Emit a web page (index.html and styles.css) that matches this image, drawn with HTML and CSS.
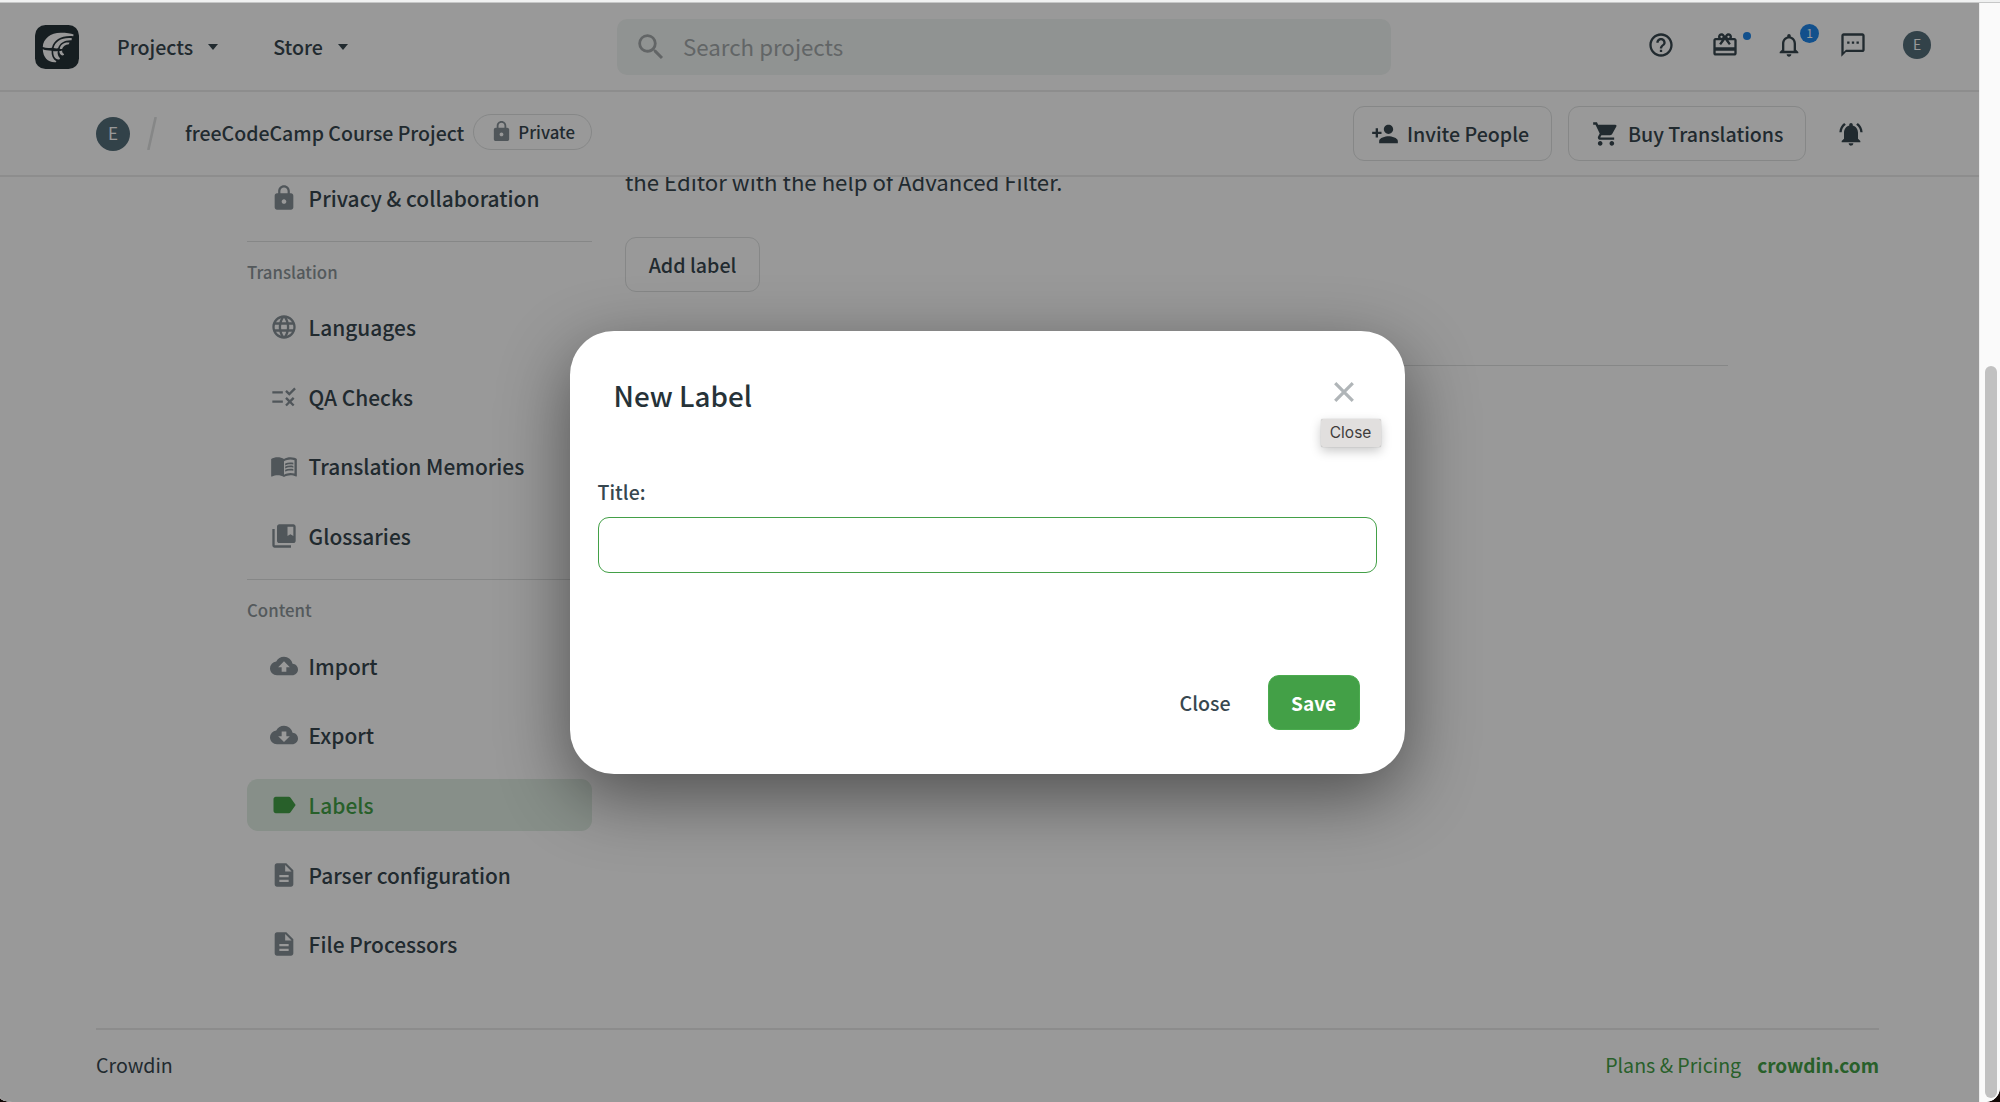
FILE: index.html
```html
<!DOCTYPE html>
<html lang="en">
<head>
<meta charset="utf-8">
<title>Labels - freeCodeCamp Course Project</title>
<link rel="stylesheet" href="styles.css">
</head>
<body>
<svg class="sprite" aria-hidden="true">
  <symbol id="lock" viewBox="0 0 24 24"><path d="M18 8h-1V6c0-2.76-2.24-5-5-5S7 3.24 7 6v2H6c-1.1 0-2 .9-2 2v10c0 1.1.9 2 2 2h12c1.1 0 2-.9 2-2V10c0-1.1-.9-2-2-2zm-6 9c-1.1 0-2-.9-2-2s.9-2 2-2 2 .9 2 2-.9 2-2 2zm3.1-9H8.9V6c0-1.71 1.39-3.1 3.1-3.1 1.71 0 3.1 1.39 3.1 3.1v2z"/></symbol>
  <symbol id="globe" viewBox="0 0 24 24"><path d="M11.99 2C6.47 2 2 6.48 2 12s4.47 10 9.99 10C17.52 22 22 17.52 22 12S17.52 2 11.99 2zm6.93 6h-2.95a15.65 15.65 0 0 0-1.38-3.56A8.03 8.03 0 0 1 18.92 8zM12 4.04c.83 1.2 1.48 2.53 1.91 3.96h-3.82c.43-1.43 1.08-2.76 1.91-3.96zM4.26 14C4.1 13.36 4 12.69 4 12s.1-1.36.26-2h3.38c-.08.66-.14 1.32-.14 2s.06 1.34.14 2H4.26zm.82 2h2.95c.32 1.25.78 2.45 1.38 3.56A7.987 7.987 0 0 1 5.08 16zm2.95-8H5.08a7.987 7.987 0 0 1 4.33-3.56A15.65 15.65 0 0 0 8.03 8zM12 19.96c-.83-1.2-1.48-2.53-1.91-3.96h3.82c-.43 1.43-1.08 2.76-1.91 3.96zM14.34 14H9.66c-.09-.66-.16-1.32-.16-2s.07-1.35.16-2h4.68c.09.65.16 1.32.16 2s-.07 1.34-.16 2zm.25 5.56c.6-1.11 1.06-2.31 1.38-3.56h2.95a8.03 8.03 0 0 1-4.33 3.56zM16.36 14c.08-.66.14-1.32.14-2s-.06-1.34-.14-2h3.38c.16.64.26 1.31.26 2s-.1 1.36-.26 2h-3.38z"/></symbol>
  <symbol id="rule" viewBox="0 0 24 24"><path d="M16.54 11 13 7.46l1.41-1.41 2.12 2.12 4.24-4.24 1.41 1.41L16.54 11zM11 7H2v2h9V7zm10 6.41L19.59 12 17 14.59 14.41 12 13 13.41 15.59 16 13 18.59 14.41 20 17 17.41 19.59 20 21 18.59 18.41 16 21 13.41zM11 15H2v2h9v-2z"/></symbol>
  <symbol id="book" viewBox="0 0 24 24"><path d="M21 5c-1.11-.35-2.33-.5-3.5-.5-1.95 0-4.05.4-5.5 1.5-1.45-1.1-3.55-1.5-5.5-1.5S2.45 4.9 1 6v14.65c0 .25.25.5.5.5.1 0 .15-.05.25-.05C3.1 20.45 5.05 20 6.5 20c1.95 0 4.05.4 5.5 1.5 1.35-.85 3.8-1.5 5.5-1.5 1.65 0 3.35.3 4.75 1.05.1.05.15.05.25.05.25 0 .5-.25.5-.5V6c-.6-.45-1.25-.75-2-1zm0 13.5c-1.1-.35-2.3-.5-3.5-.5-1.7 0-4.15.65-5.5 1.5V8c1.35-.85 3.8-1.5 5.5-1.5 1.2 0 2.4.15 3.5.5v11.5z"/><path d="M17.5 10.5c.88 0 1.73.09 2.5.26V9.240c-.79-.15-1.64-.24-2.5-.24-1.700 0-3.240.29-4.500.83v1.660c1.130-.64 2.700-.99 4.500-.99zM13 12.490v1.660c1.130-.64 2.700-.99 4.500-.99.88 0 1.730.09 2.500.26V11.900c-.79-.15-1.640-.24-2.500-.24-1.700 0-3.240.3-4.500.83zM17.500 14.330c-1.700 0-3.240.29-4.500.83v1.660c1.130-.64 2.700-.99 4.500-.99.88 0 1.730.09 2.500.26v-1.520c-.79-.16-1.640-.24-2.500-.24z"/></symbol>
  <symbol id="collection" viewBox="0 0 24 24"><path d="M4 6H2v14c0 1.100.9 2 2 2h14v-2H4V6z"/><path d="M20 2H8c-1.100 0-2 .9-2 2v12c0 1.100.9 2 2 2h12c1.100 0 2-.9 2-2V4c0-1.100-.9-2-2-2zm0 10-2.500-1.500L15 12V4h5v8z"/></symbol>
  <symbol id="upload" viewBox="0 0 24 24"><path d="M19.350 10.040A7.490 7.490 0 0 0 12 4C9.110 4 6.600 5.640 5.350 8.040A5.994 5.994 0 0 0 0 14c0 3.310 2.690 6 6 6h13c2.760 0 5-2.240 5-5 0-2.640-2.050-4.780-4.650-4.960zM14 13v4h-4v-4H7l5-5 5 5h-3z"/></symbol>
  <symbol id="download" viewBox="0 0 24 24"><path d="M19.350 10.040A7.490 7.490 0 0 0 12 4C9.110 4 6.600 5.640 5.350 8.040A5.994 5.994 0 0 0 0 14c0 3.310 2.690 6 6 6h13c2.760 0 5-2.240 5-5 0-2.640-2.050-4.780-4.650-4.960zM17 13l-5 5-5-5h3V9h4v4h3z"/></symbol>
  <symbol id="label" viewBox="0 0 24 24"><path d="M17.630 5.840C17.270 5.330 16.670 5 16 5L5 5.010C3.900 5.010 3 5.900 3 7v10c0 1.100.9 1.990 2 1.990L16 19c.67 0 1.270-.33 1.630-.84L22 12l-4.370-6.160z"/></symbol>
  <symbol id="doc" viewBox="0 0 24 24"><path d="M14 2H6c-1.100 0-1.990.9-1.990 2L4 20c0 1.100.89 2 1.990 2H18c1.100 0 2-.9 2-2V8l-6-6zm2 16H8v-2h8v2zm0-4H8v-2h8v2zm-3-5V3.500L18.500 9H13z"/></symbol>
  <symbol id="search" viewBox="0 0 24 24"><path d="M15.500 14h-.79l-.28-.27A6.471 6.471 0 0 0 16 9.500 6.500 6.500 0 1 0 9.500 16c1.610 0 3.090-.59 4.230-1.570l.27.28v.79l5 4.990L20.490 19l-4.990-5zm-6 0C7.010 14 5 11.990 5 9.500S7.010 5 9.500 5 14 7.010 14 9.500 11.990 14 9.500 14z"/></symbol>
  <symbol id="help" viewBox="0 0 24 24"><path d="M11 18h2v-2h-2v2zm1-16C6.480 2 2 6.480 2 12s4.480 10 10 10 10-4.480 10-10S17.520 2 12 2zm0 18c-4.410 0-8-3.590-8-8s3.590-8 8-8 8 3.590 8 8-3.590 8-8 8zm0-14c-2.210 0-4 1.790-4 4h2c0-1.100.9-2 2-2s2 .9 2 2c0 2-3 1.750-3 5h2c0-2.250 3-2.500 3-5 0-2.210-1.790-4-4-4z"/></symbol>
  <symbol id="gift" viewBox="0 0 24 24"><path d="M20 6h-2.180c.11-.31.18-.65.18-1 0-1.660-1.340-3-3-3-1.050 0-1.960.54-2.500 1.350l-.5.670-.5-.68C10.960 2.540 10.050 2 9 2 7.340 2 6 3.340 6 5c0 .35.07.69.18 1H4c-1.110 0-1.990.89-1.990 2L2 19c0 1.110.89 2 2 2h16c1.110 0 2-.89 2-2V8c0-1.110-.89-2-2-2zm-5-2c.55 0 1 .45 1 1s-.45 1-1 1-1-.45-1-1 .45-1 1-1zM9 4c.55 0 1 .45 1 1s-.45 1-1 1-1-.45-1-1 .45-1 1-1zm11 15H4v-2h16v2zm0-5H4V8h5.080L7 10.830 8.620 12 12 7.400l3.380 4.600L17 10.830 14.920 8H20v6z"/></symbol>
  <symbol id="bell" viewBox="0 0 24 24"><path d="M12 22c1.100 0 2-.9 2-2h-4c0 1.100.9 2 2 2zm6-6v-5c0-3.070-1.630-5.640-4.500-6.320V4c0-.83-.67-1.500-1.500-1.500s-1.500.67-1.500 1.500v.68C7.640 5.360 6 7.920 6 11v5l-2 2v1h16v-1l-2-2zm-2 1H8v-6c0-2.480 1.510-4.500 4-4.500s4 2.020 4 4.500v6z"/></symbol>
  <symbol id="chat" viewBox="0 0 24 24"><path d="M20 2H4c-1.100 0-2 .9-2 2v18l4-4h14c1.100 0 2-.9 2-2V4c0-1.100-.9-2-2-2zm0 14H6l-2 2V4h16v12zM7 9h2v2H7zm4 0h2v2h-2zm4 0h2v2h-2z"/></symbol>
  <symbol id="person-add" viewBox="0 0 24 24"><path d="M15 12c2.210 0 4-1.790 4-4s-1.790-4-4-4-4 1.790-4 4 1.790 4 4 4zm-9-2V7H4v3H1v2h3v3h2v-3h3v-2H6zm9 4c-2.670 0-8 1.340-8 4v2h16v-2c0-2.660-5.330-4-8-4z"/></symbol>
  <symbol id="cart" viewBox="0 0 24 24"><path d="M7 18c-1.100 0-1.990.9-1.990 2S5.900 22 7 22s2-.9 2-2-.9-2-2-2zM1 2v2h2l3.600 7.590-1.350 2.450c-.16.28-.25.61-.25.96 0 1.100.9 2 2 2h12v-2H7.420c-.14 0-.25-.11-.25-.25l.03-.12.9-1.630h7.450c.75 0 1.410-.41 1.750-1.030l3.580-6.490A1.003 1.003 0 0 0 20 4H5.210l-.94-2H1zm16 16c-1.100 0-1.990.9-1.990 2s.89 2 1.990 2 2-.9 2-2-.9-2-2-2z"/></symbol>
  <symbol id="bell-ring" viewBox="0 0 24 24"><path d="M7.580 4.080 6.150 2.650C3.750 4.480 2.170 7.300 2.030 10.500h2a8.445 8.445 0 0 1 3.550-6.420zm12.390 6.420h2c-.15-3.200-1.730-6.020-4.120-7.850l-1.420 1.430a8.495 8.495 0 0 1 3.540 6.420zM18 11c0-3.070-1.640-5.640-4.500-6.320V4c0-.83-.67-1.500-1.500-1.500s-1.500.67-1.500 1.500v.68C7.630 5.360 6 7.920 6 11v5l-2 2v1h16v-1l-2-2v-5zm-6 11c.14 0 .27-.01.4-.04.65-.14 1.180-.58 1.440-1.180.1-.24.15-.5.15-.78h-4c.01 1.100.9 2 2.010 2z"/></symbol>
</svg>

<div class="window">
  <div class="window-edge"></div>
  <div class="viewport">
    <div class="page">
      <header class="topbar">
        <svg class="logo" viewBox="45 45 130 130"><rect x="45" y="45" width="130" height="130" rx="31" fill="#263238"/><g fill="#fff"><path d="M68 110C69 86 91 68 121 68c16 0 31 2 38 5l-1 5c-33-3-57 9-63 34-10 1-19 1-27-2z"/><path d="M100 113c5-20 24-32 54-29l-1 6c-21-1-35 8-40 24-5 1-9 0-13-1z"/><path d="M118 115c3-13 13-20 29-18l-2 5c-11 1-17 6-20 14-3 0-5 0-7-1z"/><path d="M68 117c1 25 16 40 39 38l1-3c-10-6-15-17-14-31-10 0-18-1-26-4z"/><path d="M99 122c-1 15 6 27 18 25l2-4c-6-5-8-12-7-21-5 1-9 1-13 0z"/><path d="M117 122c0 9 5 15 13 12l1-3c-4-2-6-6-6-11-3 1-5 2-8 2z"/></g></svg>
        <nav class="menu">
          <a class="menu-item">Projects<i class="caret"></i></a>
          <a class="menu-item">Store<i class="caret"></i></a>
        </nav>
        <div class="search"><svg class="search-icon"><use href="#search"/></svg><span class="search-text">Search projects</span></div>
        <div class="tools">
          <span class="tool"><svg class="icon"><use href="#help"/></svg></span>
          <span class="tool"><svg class="icon"><use href="#gift"/></svg><i class="dot"></i></span>
          <span class="tool"><svg class="icon"><use href="#bell"/></svg><b class="badge">1</b></span>
          <span class="tool"><svg class="icon"><use href="#chat"/></svg></span>
          <span class="tool"><span class="avatar avatar-small">E</span></span>
        </div>
      </header>

      <div class="projectbar">
        <span class="avatar">E</span>
        <svg class="slash" viewBox="0 0 10 33"><path d="M8.700 0 1.300 33" stroke="#dfe1e2" stroke-width="2.600"/></svg>
        <h1 class="project-name">freeCodeCamp Course Project</h1>
        <span class="pill"><svg class="pill-icon"><use href="#lock"/></svg>Private</span>
        <div class="actions">
          <button class="button invite"><svg class="icon"><use href="#person-add"/></svg>Invite People</button>
          <button class="button buy"><svg class="icon"><use href="#cart"/></svg>Buy Translations</button>
          <svg class="icon"><use href="#bell-ring"/></svg>
        </div>
      </div>

      <main class="content">
        <aside class="sidebar">
          <a class="side-item first"><svg class="icon"><use href="#lock"/></svg>Privacy &amp; collaboration</a>
          <section class="side-group">
            <h2 class="side-title">Translation</h2>
            <a class="side-item"><svg class="icon"><use href="#globe"/></svg>Languages</a>
            <a class="side-item"><svg class="icon"><use href="#rule"/></svg>QA Checks</a>
            <a class="side-item"><svg class="icon"><use href="#book"/></svg>Translation Memories</a>
            <a class="side-item"><svg class="icon"><use href="#collection"/></svg>Glossaries</a>
          </section>
          <section class="side-group">
            <h2 class="side-title">Content</h2>
            <a class="side-item"><svg class="icon"><use href="#upload"/></svg>Import</a>
            <a class="side-item"><svg class="icon"><use href="#download"/></svg>Export</a>
            <a class="side-item active"><svg class="icon"><use href="#label"/></svg>Labels</a>
            <a class="side-item"><svg class="icon"><use href="#doc"/></svg>Parser configuration</a>
            <a class="side-item"><svg class="icon"><use href="#doc"/></svg>File Processors</a>
          </section>
        </aside>
        <section class="labels">
          <p class="intro">the Editor with the help of Advanced Filter.</p>
          <button class="button add">Add label</button>
          <hr class="rule">
        </section>
      </main>

      <footer class="footer">
        <span>Crowdin</span>
        <nav class="footer-links"><a>Plans &amp; Pricing</a><a class="strong">crowdin.com</a></nav>
      </footer>

      <div class="overlay">
        <div class="modal">
          <div class="modal-head">
            <h2 class="modal-title">New Label</h2>
            <svg class="close" viewBox="0 0 20 20"><path d="M1.200 1.200 18.800 18.800M18.800 1.200 1.200 18.800" stroke="#b0b5b8" stroke-width="3.200"/></svg>
            <span class="tooltip">Close</span>
          </div>
          <label class="field">Title:<input class="input" type="text"></label>
          <div class="modal-actions">
            <button class="text-button">Close</button>
            <button class="save">Save</button>
          </div>
        </div>
      </div>
    </div>
    <div class="scrollbar"><div class="thumb"></div></div>
  </div>
</div>
</body>
</html>
```
FILE: styles.css
```css
* { box-sizing: border-box; }

body {
  margin: 0;
  background: #120806;
  color: #37474f;
  font-family: "Noto Sans CJK SC", "Noto Sans", sans-serif;
  font-weight: 500;
  font-size: 19.6px;
  overflow: hidden;
}

h1, h2, p, hr { margin: 0; }
button { font: inherit; color: inherit; background: none; border: 0; padding: 0; }
.sprite { display: none; }
.icon { flex: none; width: 28px; height: 28px; fill: currentColor; }

.window {
  display: flex;
  flex-direction: column;
  height: 1102px;
  border-radius: 0 0 14px 12px / 0 0 15px 5px;
  overflow: hidden;
  background: #fff;
}
.window-edge { flex: none; height: 3px; background: linear-gradient(#f0f1f1 0 2px, #c6c7c7 2px); }
.viewport { flex: 1; display: flex; min-height: 0; }
.page { position: relative; flex: 1; display: flex; flex-direction: column; background: #fff; overflow: hidden; }

.topbar {
  flex: none;
  display: flex;
  align-items: center;
  height: 89px;
  padding: 0 48px 0 35px;
  border-bottom: 2px solid #ebecec;
}
.logo { width: 44px; height: 44px; }
.menu { display: flex; gap: 55px; width: 498px; margin-left: 38px; }
.menu-item { display: flex; align-items: center; gap: 15px; line-height: 30px; }
.caret { border: 5.5px solid transparent; border-top: 6px solid currentColor; border-bottom: 0; }
.search {
  display: flex;
  align-items: center;
  gap: 15px;
  width: 774px;
  height: 56px;
  margin-left: 2px;
  padding-left: 17px;
  border-radius: 10px;
  background: #f1f5f3;
  color: #a3a9ab;
  font-size: 22.3px;
  font-weight: 400;
  line-height: 30px;
}
.search-text { padding-bottom: 2px; }
.search-icon { width: 34px; height: 34px; fill: #a3a8aa; }
.tools { display: flex; gap: 36px; margin: 0 0 3px auto; }
.tool { position: relative; display: flex; width: 28px; height: 28px; }
.dot { position: absolute; left: 32px; top: 1px; width: 8px; height: 8px; border-radius: 50%; background: #1e86ea; }
.badge {
  position: absolute;
  left: 25px;
  top: -7px;
  width: 19px;
  height: 19px;
  border-radius: 50%;
  background: #1e86ea;
  color: #fff;
  font-size: 12px;
  line-height: 18px;
  font-weight: 400;
  text-align: center;
}
.avatar {
  flex: none;
  width: 34px;
  height: 34px;
  border-radius: 50%;
  background: #546e7a;
  color: #fff;
  font-size: 17px;
  font-weight: 400;
  line-height: 32px;
  text-align: center;
}
.avatar-small { width: 28px; height: 28px; font-size: 14px; line-height: 27px; }

.projectbar {
  flex: none;
  display: flex;
  align-items: center;
  height: 85px;
  padding-left: 96px;
  border-bottom: 2px solid #ebecec;
}
.slash { width: 10px; height: 33px; margin-left: 17px; }
.project-name { margin: 0 0 2px 28px; font-size: 19.5px; font-weight: 500; line-height: 30px; white-space: nowrap; }
.pill {
  display: flex;
  align-items: center;
  gap: 5px;
  width: 119px;
  height: 36px;
  margin: 0 0 3px 9px;
  padding: 0 0 1px 16px;
  border: 1.500px solid #e0e2e2;
  border-radius: 18px;
  font-size: 16.8px;
}
.pill-icon { width: 23px; height: 23px; fill: #858f96; }
.actions { display: flex; align-items: center; margin-left: auto; padding-right: 114px; }
.button {
  display: flex;
  align-items: center;
  height: 55px;
  border: 1.500px solid #e0e2e2;
  border-radius: 11px;
  line-height: 30px;
  white-space: nowrap;
}
.invite { gap: 8px; width: 199px; margin-right: 16px; padding-left: 17px; }
.buy { gap: 8px; width: 238px; margin-right: 31px; padding-left: 23px; }

.content { flex: none; display: flex; gap: 33px; height: 851px; padding-left: 247px; overflow: hidden; }
.sidebar { width: 345px; margin-top: -5px; }
.side-item {
  display: flex;
  align-items: center;
  gap: 11px;
  height: 52.300px;
  margin-bottom: 17.350px;
  padding-left: 22.600px;
  border-radius: 11px;
  font-size: 20.900px;
  line-height: 30px;
}
.side-item.first { margin-bottom: 16.600px; }
.side-item .icon { color: #858f96; }
.side-group { border-top: 1.500px solid #e0e2e2; }
.side-title { margin: 18px 0 17px; color: #8c9599; font-size: 16.800px; font-weight: 500; line-height: 24px; }
.active { background: #e1efe4; color: #43a047; }
.side-item.active .icon { color: #43a047; }

.labels { width: 1103px; }
.intro { margin-top: -11px; font-size: 22.200px; font-weight: 400; line-height: 30px; }
.add { justify-content: center; width: 135px; margin-top: 41px; }
.rule { border: 0; border-top: 1.500px solid #e0e2e2; margin-top: 73px; }

.footer {
  display: flex;
  justify-content: space-between;
  margin: 0 100px 0 96px;
  padding-top: 20px;
  border-top: 2px solid #e9eaea;
  font-weight: 400;
  line-height: 30px;
}
.footer-links { display: flex; gap: 16px; color: #43a047; }
.strong { font-size: 19px; font-weight: 700; }

.scrollbar { flex: none; width: 21px; padding: 363px 4px 4px 5px; border-left: 1px solid #ececec; background: #fafafa; }
.thumb { height: 732px; width: 12px; border-radius: 6px; background: #c1c1c1; }

.overlay { position: absolute; inset: 0; background: rgba(0, 0, 0, .4); }
.modal {
  width: 835px;
  height: 443px;
  margin: 328px 0 0 569.600px;
  padding: 50px 28px 44px;
  border-radius: 44px;
  background: #fff;
  box-shadow: 0 22px 70px rgba(0, 0, 0, .48);
}
.modal-head { position: relative; display: flex; justify-content: space-between; height: 97px; padding: 0 23px 0 16px; }
.modal-title { color: #263238; font-size: 27.800px; font-weight: 500; line-height: 28px; }
.close { width: 20px; height: 20px; margin-top: 1px; }
.tooltip {
  position: absolute;
  right: -4px;
  top: 38px;
  width: 60px;
  height: 28px;
  border-radius: 2px;
  background: #e1dfde;
  box-shadow: 0 0 1px rgba(0, 0, 0, .4), 0 4px 11px rgba(0, 0, 0, .22);
  color: #3f3c3b;
  font: 15.500px/28px Inter, sans-serif;
  text-align: center;
}
.field { display: flex; flex-direction: column; gap: 11px; font-size: 19.500px; line-height: 28px; }
.input { width: 100%; height: 56px; border: 1.500px solid #43a047; border-radius: 11px; background: #fff; outline: 0; }
.modal-actions { display: flex; justify-content: flex-end; align-items: center; gap: 37px; margin: 102px 17px 0 0; }
.text-button { line-height: 30px; }
.save { width: 92px; height: 55px; border: 1px solid #4bab4f; border-radius: 11px; background: #43a047; color: #fff; font-size: 19.100px; font-weight: 700; line-height: 30px; }
```
